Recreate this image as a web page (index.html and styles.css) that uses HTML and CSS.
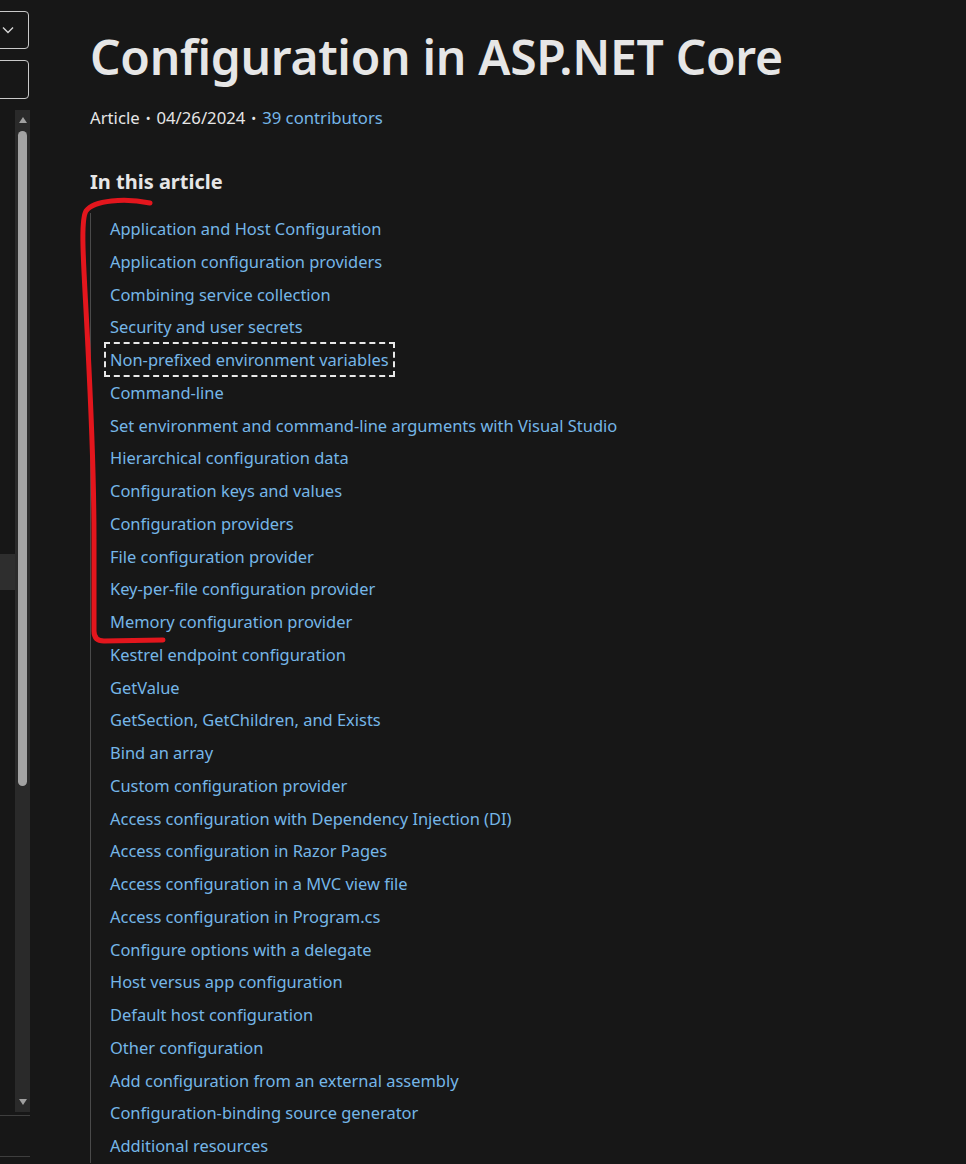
FILE: index.html
```html
<!DOCTYPE html>
<html lang="en">
<head>
<meta charset="utf-8">
<title>Configuration in ASP.NET Core</title>
<link rel="stylesheet" href="styles.css">
</head>
<body>
<div class="page">
  <aside class="sidebar">
    <div class="select-box">
      <svg class="chev" width="12" height="8" viewBox="0 0 12 8"><path d="M1 1.5 L6 6.5 L11 1.5" fill="none" stroke="#d6d6d6" stroke-width="1.4"/></svg>
    </div>
    <div class="input-box"></div>
    <div class="nav-scroll">
      <div class="nav-list">
        <div class="nav-active"></div>
      </div>
      <div class="scrollbar">
        <svg class="arrow" width="10" height="8" viewBox="0 0 10 8"><path d="M5 1 L9 7 L1 7 Z" fill="#a0a0a0"/></svg>
        <div class="track"><div class="thumb"></div></div>
        <svg class="arrow" width="10" height="8" viewBox="0 0 10 8"><path d="M1 1 L9 1 L5 7 Z" fill="#a0a0a0"/></svg>
      </div>
    </div>
    <div class="side-rule first"></div>
    <div class="side-rule second"></div>
  </aside>

  <main class="content">
    <h1 class="title">Configuration in ASP.NET Core</h1>
    <div class="meta">
      <span>Article</span><span class="dot">•</span><span>04/26/2024</span><span class="dot">•</span><a href="#" class="link">39 contributors</a>
    </div>
    <h2 class="toc-heading">In this article</h2>
    <div class="toc-wrap">
      <svg class="annotation" width="120" height="460" viewBox="70 195 120 460">
        <path d="M150 204 C125 199 94 201 86 212 C80 222 84 270 87 330 C90 390 94 460 94 540 L94 632 Q94 642 104 642 L163 641" fill="none" stroke="#e3161d" stroke-width="5" stroke-linecap="round" stroke-linejoin="round"/>
      </svg>
      <ul class="toc">
        <li><a href="#">Application and Host Configuration</a></li>
        <li><a href="#">Application configuration providers</a></li>
        <li><a href="#">Combining service collection</a></li>
        <li><a href="#">Security and user secrets</a></li>
        <li><a href="#" class="focused">Non-prefixed environment variables</a></li>
        <li><a href="#">Command-line</a></li>
        <li><a href="#">Set environment and command-line arguments with Visual Studio</a></li>
        <li><a href="#">Hierarchical configuration data</a></li>
        <li><a href="#">Configuration keys and values</a></li>
        <li><a href="#">Configuration providers</a></li>
        <li><a href="#">File configuration provider</a></li>
        <li><a href="#">Key-per-file configuration provider</a></li>
        <li><a href="#">Memory configuration provider</a></li>
        <li><a href="#">Kestrel endpoint configuration</a></li>
        <li><a href="#">GetValue</a></li>
        <li><a href="#">GetSection, GetChildren, and Exists</a></li>
        <li><a href="#">Bind an array</a></li>
        <li><a href="#">Custom configuration provider</a></li>
        <li><a href="#">Access configuration with Dependency Injection (DI)</a></li>
        <li><a href="#">Access configuration in Razor Pages</a></li>
        <li><a href="#">Access configuration in a MVC view file</a></li>
        <li><a href="#">Access configuration in Program.cs</a></li>
        <li><a href="#">Configure options with a delegate</a></li>
        <li><a href="#">Host versus app configuration</a></li>
        <li><a href="#">Default host configuration</a></li>
        <li><a href="#">Other configuration</a></li>
        <li><a href="#">Add configuration from an external assembly</a></li>
        <li><a href="#">Configuration-binding source generator</a></li>
        <li><a href="#">Additional resources</a></li>
      </ul>
    </div>
  </main>
</div>
</body>
</html>
```
FILE: styles.css
```css
html, body {
  margin: 0;
  padding: 0;
  background: #171717;
  color: #e6e6e6;
  font-family: "Noto Sans", "Open Sans", sans-serif;
  overflow: hidden;
}

.page {
  display: flex;
  height: 1164px;
}

/* ---------- left sidebar ---------- */
.sidebar {
  width: 30px;
  flex: none;
  display: flex;
  flex-direction: column;
}

.select-box {
  margin-top: 11px;
  margin-left: -20px;
  width: 47px;
  height: 36px;
  border: 1px solid #c9c9c9;
  border-radius: 4px;
  display: flex;
  align-items: center;
  justify-content: flex-end;
}
.chev {
  margin-right: 14px;
}

.input-box {
  margin-top: 11px;
  margin-left: -20px;
  width: 47px;
  height: 37px;
  border: 1px solid #c9c9c9;
  border-radius: 4px;
}

.nav-scroll {
  margin-top: 11px;
  height: 1002px;
  display: flex;
}

.nav-list {
  width: 15px;
  display: flex;
  flex-direction: column;
}
.nav-active {
  margin-top: 444px;
  height: 36px;
  background: #2e2e2e;
}

.scrollbar {
  width: 15px;
  background: #2a2a2a;
  display: flex;
  flex-direction: column;
  align-items: center;
}
.arrow {
  flex: none;
  margin: 6px 0 6px;
}
.track {
  flex: 1;
  width: 100%;
  display: flex;
  justify-content: center;
}
.thumb {
  width: 9px;
  height: 655px;
  margin-top: 1px;
  background: #a3a3a3;
  border-radius: 5px;
}

.side-rule {
  height: 1px;
  background: #3e3e3e;
}
.side-rule.first { margin-top: 3px; }
.side-rule.second { margin-top: 40px; }

/* ---------- main content ---------- */
.content {
  padding-left: 60px;
  flex: 1;
}

.title {
  margin: 24px 0 0;
  font-size: 48px;
  font-weight: 600;
  line-height: 66px;
  color: #e6e6e6;
  letter-spacing: -0.3px;
}

.meta {
  margin-top: 16px;
  font-size: 16.7px;
  line-height: 24px;
  display: flex;
  align-items: center;
}
.dot {
  margin: 0 6px;
  font-size: 13px;
}
.link {
  color: #75b6e7;
  text-decoration: none;
}

.toc-heading {
  margin: 39px 0 0;
  font-size: 20px;
  font-weight: 700;
  line-height: 26px;
  color: #e6e6e6;
}

.toc-wrap {
  position: relative;
  margin-top: 18px;
}

.annotation {
  position: absolute;
  left: -20px;
  top: -19px;
  overflow: visible;
  pointer-events: none;
  z-index: 2;
}

.toc {
  list-style: none;
  margin: 0;
  padding: 0 0 0 19px;
  border-left: 1px solid #4a4a4a;
}
.toc li {
  height: 32.75px;
  line-height: 32.75px;
  font-size: 16.45px;
}
.toc a {
  color: #75b6e7;
  text-decoration: none;
}
.toc a.focused {
  outline: 2px dashed #e8e8e8;
  outline-offset: 4px;
}
```
